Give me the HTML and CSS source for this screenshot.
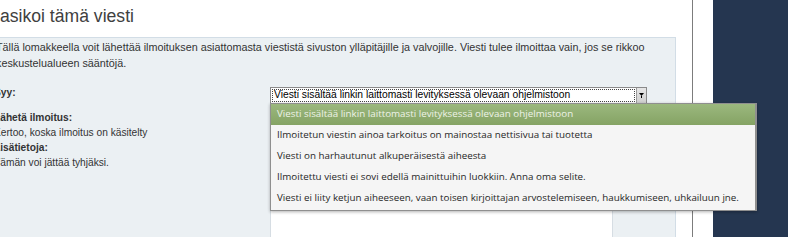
FILE: index.html
```html
<!DOCTYPE html>
<html lang="fi">
<head>
<meta charset="UTF-8" />
<meta name="viewport" content="width=device-width, initial-scale=1" />
<title>Ilmoita viesti</title>
<link rel="stylesheet" href="styles.css">
</head>
<body>
<div class="page">
    <main class="main">
        <h2 class="title">asikoi tämä viesti</h2>
        <form class="panel" id="reportForm">
            <p class="intro">Tällä lomakkeella voit lähettää ilmoituksen asiattomasta viestistä sivuston ylläpitäjille ja valvojille. Viesti tulee ilmoittaa vain, jos se rikkoo keskustelualueen sääntöjä.</p>

            <div class="row row-reason">
                <div class="label"><strong>Syy:</strong></div>
                <div class="field">
                    <div class="select">
                        <span class="select-value">Viesti sisältää linkin laittomasti levityksessä olevaan ohjelmistoon</span>
                        <span class="select-arrow">
                            <svg width="5" height="5" viewBox="0 0 5 5"><polygon points="0,0 5,0 2.5,3" fill="#000"/><rect x="2" y="3" width="1" height="2" fill="#000"/></svg>
                        </span>
                    </div>
                    <ul class="dropdown">
                        <li class="active">Viesti sisältää linkin laittomasti levityksessä olevaan ohjelmistoon</li>
                        <li>Ilmoitetun viestin ainoa tarkoitus on mainostaa nettisivua tai tuotetta</li>
                        <li>Viesti on harhautunut alkuperäisestä aiheesta</li>
                        <li>Ilmoitettu viesti ei sovi edellä mainittuihin luokkiin. Anna oma selite.</li>
                        <li>Viesti ei liity ketjun aiheeseen, vaan toisen kirjoittajan arvostelemiseen, haukkumiseen, uhkailuun jne.</li>
                    </ul>
                </div>
            </div>

            <div class="row row-notify">
                <div class="label"><strong>Lähetä ilmoitus:</strong><br>Kertoo, koska ilmoitus on käsitelty</div>
                <div class="field"><input type="checkbox" name="notify" checked /></div>
            </div>

            <div class="row">
                <div class="label"><strong>Lisätietoja:</strong><br>Tämän voi jättää tyhjäksi.</div>
                <div class="field"><textarea name="message"></textarea></div>
            </div>
        </form>
    </main>
    <div class="gutter"></div>
    <aside class="sidebar"></aside>
</div>
</body>
</html>
```

FILE: styles.css
```css
* {
    box-sizing: border-box;
}
body {
    margin: 0;
    background: white;
    font-family: "Liberation Sans", Arial, sans-serif;
    font-size: 10.2px;
    color: #333;
    overflow: hidden;
}
.page {
    display: flex;
    height: 237px;
}
.main {
    width: 698px;
    margin-left: -6px;
    flex-shrink: 0;
}
.title {
    margin: 0;
    padding: 4px 0 9px 6px;
    font-size: 17.6px;
    line-height: 24px;
    font-weight: normal;
    color: #404040;
}
.panel {
    width: 682px;
    height: 200px;
    margin: 0;
    padding: 1px 0 0 0;
    background: #ebf0f3;
    border-top: 1px solid #d2dde6;
    border-right: 1px solid #d2dde6;
}
.intro {
    margin: 0;
    padding-left: 2px;
    width: 672px;
    font-size: 10.8px;
    line-height: 16px;
}
.row {
    display: flex;
}
.row-reason {
    margin-top: 14px;
}
.row-notify {
    margin-top: 6px;
    height: 30px;
}
.label {
    width: 276px;
    flex-shrink: 0;
    line-height: 15px;
}
.field {
    position: relative;
}
.row-reason .field {
    margin-top: 2px;
}
.select {
    display: flex;
    width: 377px;
    height: 17px;
    background: white;
    border: 1px solid #8a8a8a;
}
.select-value {
    flex: 1;
    margin: 1px;
    padding-left: 1px;
    border: 1px dotted #444;
    font-size: 10.3px;
    line-height: 10px;
    color: #000;
    white-space: nowrap;
    overflow: hidden;
}
.select-arrow {
    width: 10px;
    display: flex;
    align-items: center;
    justify-content: center;
    background: linear-gradient(#e6e6e6, #cfcfcf);
    border-left: 1px solid #9a9a9a;
}
.dropdown {
    position: absolute;
    top: 16px;
    left: 0;
    z-index: 2;
    width: 487px;
    margin: 0;
    padding: 0 0 1px;
    list-style: none;
    background: #f5f5f5;
    border: 1px solid #8f8f8f;
    border-right-width: 2px;
    box-shadow: 0 1px 3px rgba(0,0,0,0.3);
    font-family: "Open Sans", "Noto Sans", sans-serif;
    font-size: 9.8px;
}
.dropdown li {
    height: 21px;
    line-height: 19px;
    padding-left: 6px;
    color: #262626;
    white-space: nowrap;
}
.dropdown li.active {
    background: linear-gradient(#9bb87e, #85a364);
    color: #eef3e8;
}
input[type="checkbox"] {
    margin: 2px 0 0;
}
textarea {
    display: block;
    width: 343px;
    height: 110px;
    border: 1px solid #d6dde3;
    background: white;
    resize: none;
}
.gutter {
    width: 21px;
    flex-shrink: 0;
    border-left: 1px solid #7c7c7c;
}
.sidebar {
    flex: 1;
    background: #253650;
}
```
